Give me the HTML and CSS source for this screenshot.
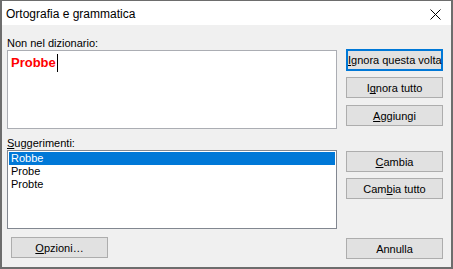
FILE: index.html
```html
<!DOCTYPE html>
<html lang="it">
<head>
    <meta charset="UTF-8">
    <title>Ortografia e grammatica</title>
    <link rel="stylesheet" href="styles.css">
</head>
<body>
    <div class="dialog">
        <div class="titlebar">
            <span class="title">Ortografia e grammatica</span>
            <svg class="close" width="11" height="11" viewBox="0 0 11 11">
                <path d="M0.5 0.5 L10.5 10.5 M10.5 0.5 L0.5 10.5" stroke="#000" stroke-width="1" fill="none"/>
            </svg>
        </div>

        <div class="content">
            <!-- Colonna sinistra -->
            <div class="left">
                <div class="label">Non nel dizionario:</div>
                <div class="textbox">
                    <span class="wrong">Probbe</span><span class="caret"></span>
                </div>

                <div class="label label-gap"><u>S</u>uggerimenti:</div>
                <div class="listbox">
                    <div class="item selected">Robbe</div>
                    <div class="item">Probe</div>
                    <div class="item">Probte</div>
                </div>

                <button class="btn btn-options"><u>O</u>pzioni…</button>
            </div>

            <!-- Colonna destra -->
            <div class="right">
                <button class="btn focused"><u>I</u>gnora questa volta</button>
                <button class="btn">I<u>g</u>nora tutto</button>
                <button class="btn"><u>A</u>ggiungi</button>
                <button class="btn group-gap"><u>C</u>ambia</button>
                <button class="btn">Cam<u>b</u>ia tutto</button>
                <button class="btn btn-cancel">Annulla</button>
            </div>
        </div>
    </div>
</body>
</html>
```

FILE: styles.css
```css
* {
    margin: 0;
    padding: 0;
    box-sizing: border-box;
}
body, html {
    width: 453px;
    height: 269px;
    overflow: hidden;
    background: #6d6d6d;
    font-family: "Liberation Sans", Arial, sans-serif;
}
u {
    text-decoration-skip-ink: none;
    text-underline-offset: 1px;
}
.dialog {
    width: 453px;
    height: 269px;
    border: 2px solid #6d6d6d;
    border-top-width: 1px;
    display: flex;
    flex-direction: column;
    background: #f0f0f0;
}
.titlebar {
    height: 24px;
    background: #fff;
    display: flex;
    align-items: center;
    justify-content: space-between;
    padding: 0 10px 0 4px;
}
.title {
    font-size: 12px;
    color: #000;
    padding-top: 1px;
}
.close {
    margin-top: 3px;
}
.content {
    flex: 1;
    display: flex;
    padding: 12px 0 0 5px;
    gap: 9px;
}
.left {
    width: 330px;
    display: flex;
    flex-direction: column;
}
.label {
    font-size: 11px;
    line-height: 13px;
    height: 13px;
    color: #000;
}
.label-gap {
    margin-top: 8px;
}
.textbox {
    height: 79px;
    background: #fff;
    border: 1px solid #abadb3;
    padding: 3px 0 0 3px;
    display: flex;
    align-items: flex-start;
}
.wrong {
    color: #ff0000;
    font-weight: bold;
    font-size: 13px;
    line-height: 18px;
}
.caret {
    width: 1px;
    height: 18px;
    background: #000;
    margin-left: 1px;
}
.listbox {
    height: 79px;
    background: #fff;
    border: 1px solid #828790;
    padding: 1px;
}
.item {
    font-size: 11px;
    line-height: 13px;
    height: 13px;
    padding-left: 2px;
    color: #000;
}
.item.selected {
    background: #0078d7;
    color: #fff;
}
.right {
    width: 97px;
    display: flex;
    flex-direction: column;
    padding-top: 12px;
}
.btn {
    width: 97px;
    height: 21px;
    background: #e1e1e1;
    border: 1px solid #adadad;
    font-family: "Liberation Sans", Arial, sans-serif;
    font-size: 11px;
    color: #000;
    margin-bottom: 7px;
    white-space: nowrap;
}
.btn.focused {
    border: 2px solid #0078d7;
    padding: 0;
    height: 22px;
    margin-bottom: 6px;
}
.group-gap {
    margin-top: 18px;
    margin-bottom: 6px;
}
.btn-cancel {
    margin-top: 32px;
}
.btn-options {
    margin-top: 8px;
    margin-left: 4px;
}
```
